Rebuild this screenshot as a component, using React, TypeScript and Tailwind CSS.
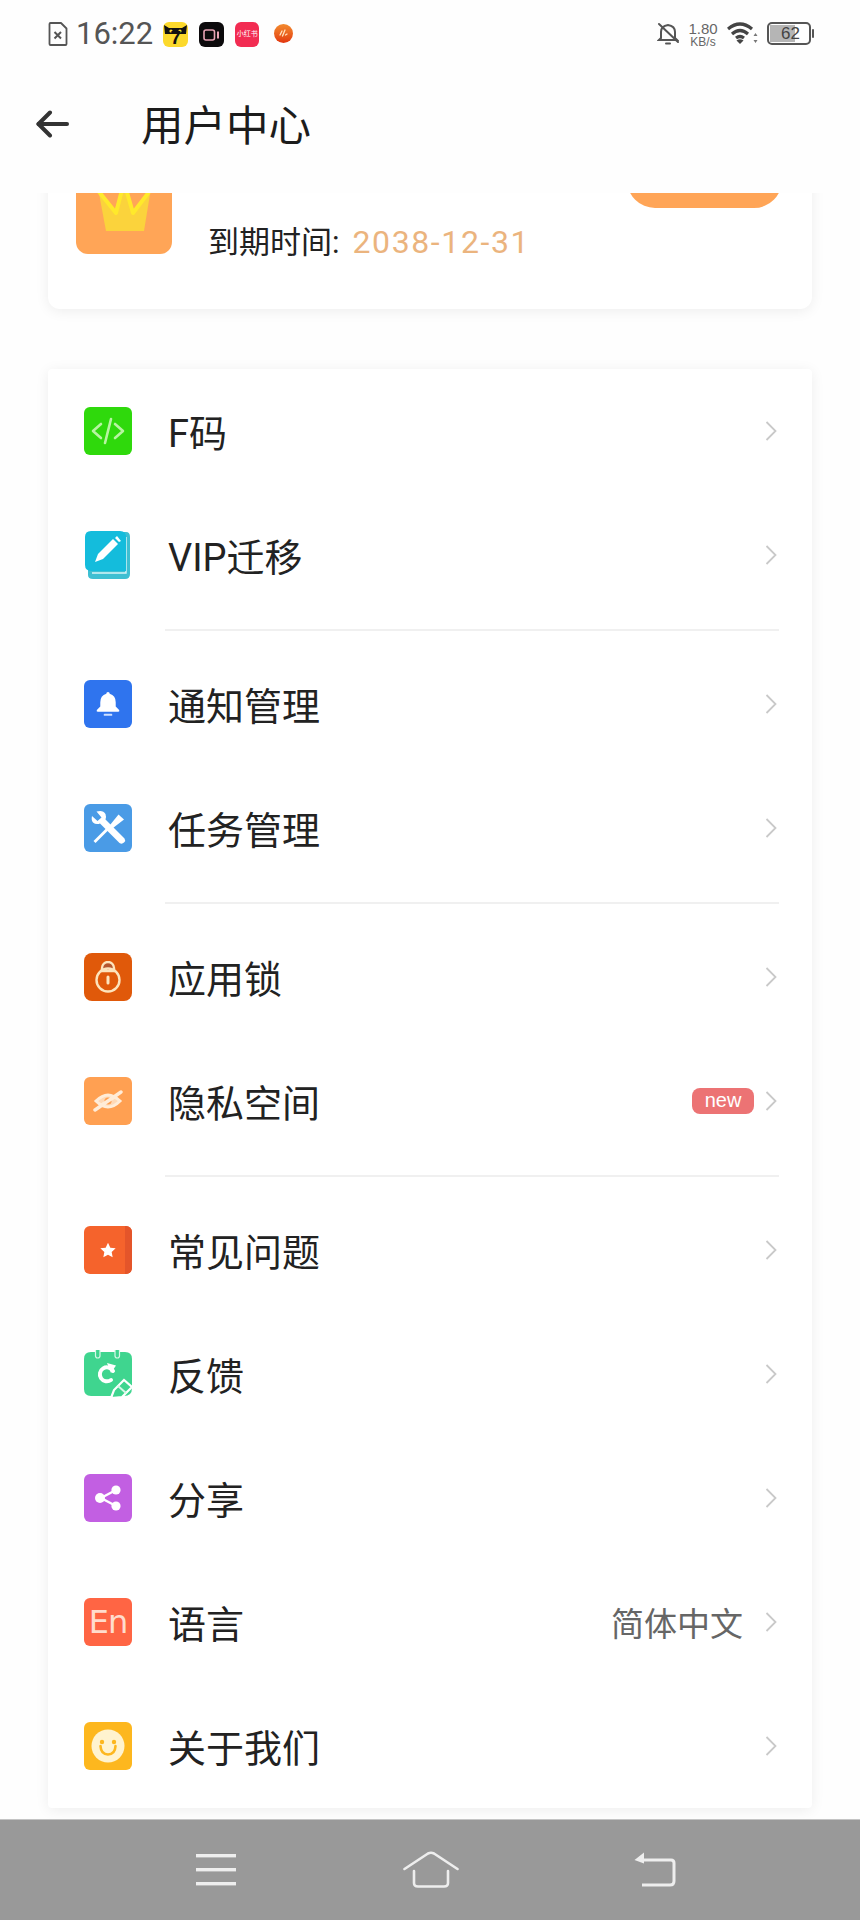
import React from 'react';

const CodeIcon = () => (
  <div className="w-12 h-12 rounded-md bg-[#2fd90c] flex items-center justify-center">
    <svg width="36" height="36" viewBox="0 0 36 36" fill="none" stroke="#b8f4a2" strokeWidth="2.6" strokeLinecap="round" strokeLinejoin="round">
      <path d="M11 11 L3 18 L11 25" />
      <path d="M25 11 L33 18 L25 25" />
      <path d="M21 6 L15 30" />
    </svg>
  </div>
);

const NoteIcon = () => (
  <svg width="48" height="48" viewBox="0 0 48 48">
    <path d="M4 38 V44 Q4 48 9 48 H41 Q46 48 46 43 V6 Q46 1 42 1 H38 V38 Z" fill="#3ebfd2" />
    <path d="M8 42 H42 V6" fill="none" stroke="#d8f5f8" strokeWidth="1.4" />
    <path d="M1 6 Q1 0 7 0 H36 Q42 0 42 6 V40 H8 Q1 40 1 34 Z" fill="#14bcdc" />
    <path d="M11 31 L14 23 L29 8 L34 13 L19 28 Z" fill="#fff" />
    <path d="M31 7 L33 5 L37 10 L35 11 Z" fill="#fff" />
  </svg>
);

const BellIcon = () => (
  <div className="w-12 h-12 rounded-md bg-[#2f74ee] flex items-center justify-center">
    <svg width="24" height="26" viewBox="0 0 28 30" fill="#fff">
      <path d="M14 1 a2 2 0 0 1 2 2 Q23 5 23 13 V18 L27 22 Q28 24 26 24 H2 Q0 24 1 22 L5 18 V13 Q5 5 12 3 a2 2 0 0 1 2 -2 Z" />
      <rect x="9" y="26.5" width="10" height="2.2" rx="1" fill="#cfe0ff" />
    </svg>
  </div>
);

const ToolsIcon = () => (
  <div className="w-12 h-12 rounded-md bg-[#4a9be6] flex items-center justify-center">
    <svg width="38" height="38" viewBox="0 0 38 38" fill="#fff">
      {/* wrench */}
      <path d="M3 7 L8.5 12 L12.5 8.5 L7.5 2.5 Q14 0.5 16.5 5 Q17.5 8 16.5 10.5 L35.5 29.5 Q37 31.5 35 33.5 Q33 35.5 30.5 34 L11 14.5 Q7 16 4 13.5 Q2 11 3 7 Z" />
      {/* screwdriver */}
      <path d="M4.5 32 L18 18.5 L20 20.5 L6.5 34 Z" />
      <path d="M21 16 L29.5 5.5 L35 10.5 L24 19 Z" />
    </svg>
  </div>
);

const LockIcon = () => (
  <div className="w-12 h-12 rounded-lg bg-[#e0590a] flex items-center justify-center">
    <svg width="30" height="32" viewBox="0 0 30 32" fill="none" stroke="#fde4bd" strokeWidth="2.4">
      <path d="M9 10 V7 a6 6 0 0 1 12 0 V10 Z" fill="#b5562f" />
      <circle cx="15" cy="19" r="11.5" />
      <path d="M15 16 V22" strokeWidth="3" strokeLinecap="round" />
    </svg>
  </div>
);

const EyeOffIcon = () => (
  <div className="w-12 h-12 rounded-md bg-[#ffa052] flex items-center justify-center">
    <svg width="30" height="24" viewBox="0 0 30 24" fill="none" stroke="#ffecd8" strokeLinecap="round">
      <path d="M3 12 Q15 0 27 12 Q15 24 3 12 Z" strokeWidth="3" fill="#ffd9b6" />
      <path d="M2 21 L28 3" strokeWidth="3.4" />
      <circle cx="15" cy="12" r="3.6" fill="#ffa052" stroke="none" />
      <path d="M9 16 L21 8" stroke="#ffecd8" strokeWidth="3.4" />
    </svg>
  </div>
);

const StarIcon = () => (
  <div className="w-12 h-12 rounded-md bg-[#f5632c] relative overflow-hidden flex items-center justify-center">
    <div className="absolute right-0 top-0 bottom-0 w-[7px] bg-[#e4552a]" />
    <svg width="16" height="16" viewBox="0 0 24 24" fill="#fff" className="relative">
      <path d="M12 1 L15.5 8.5 L23.5 9.5 L17.5 15 L19 23 L12 19 L5 23 L6.5 15 L0.5 9.5 L8.5 8.5 Z" />
    </svg>
  </div>
);

const FeedbackIcon = () => (
  <svg width="48" height="48" viewBox="0 0 48 48">
    <path d="M0 9 Q0 2 7 2 H41 Q48 2 48 9 V38 Q48 46 40 46 H7 Q0 46 0 39 Z" fill="#3fd58f" />
    <rect x="11.5" y="-2" width="4.5" height="10" rx="2.2" fill="#3fd58f" stroke="#d8f7e8" strokeWidth="1.2" />
    <rect x="31" y="-2" width="4.5" height="10" rx="2.2" fill="#3fd58f" stroke="#d8f7e8" strokeWidth="1.2" />
    <path d="M29 21 A7 7 0 1 0 27 30" fill="none" stroke="#fff" strokeWidth="4" strokeLinecap="round" />
    <path d="M23 13 L32 15.5 L27 23 Z" fill="#fff" />
    <path d="M27 48 L30 40 L40 30 L48 37 L38 47 Z" fill="#3fd58f" stroke="#fff" strokeWidth="2.2" />
    <path d="M34 36 L42 43" stroke="#d5f7e6" strokeWidth="2" />
  </svg>
);

const ShareIcon = () => (
  <div className="w-12 h-12 rounded-md bg-[#c25fe2] flex items-center justify-center">
    <svg width="28" height="28" viewBox="0 0 28 28" fill="#fff" stroke="#fff">
      <path d="M22 6 L7 14 L22 22" fill="none" strokeWidth="2.4" />
      <circle cx="22" cy="6" r="4.6" stroke="none" />
      <circle cx="6" cy="14" r="5" stroke="none" />
      <circle cx="22" cy="22" r="4.6" stroke="none" />
    </svg>
  </div>
);

const EnIcon = () => (
  <div className="w-12 h-12 rounded-md bg-[#ff6544] flex items-center justify-center">
    <span className="text-[32px] leading-none text-[#ffdccd] font-['DejaVu_Sans',sans-serif] font-normal tracking-[-1px]">En</span>
  </div>
);

const SmileIcon = () => (
  <div className="w-12 h-12 rounded-md bg-[#fdb71e] flex items-center justify-center">
    <svg width="36" height="36" viewBox="0 0 36 36">
      <circle cx="18" cy="18" r="16.5" fill="#fff3cf" />
      <circle cx="12" cy="14" r="2.2" fill="#fdb71e" />
      <circle cx="24" cy="14" r="2.2" fill="#fdb71e" />
      <path d="M10.5 18 Q11 26.5 18 26.5 Q25 26.5 25.5 18" fill="none" stroke="#fdb71e" strokeWidth="2.6" strokeLinecap="round" />
    </svg>
  </div>
);

const Chevron = () => (
  <svg width="12" height="20" viewBox="0 0 12 20" fill="none" stroke="#c9c9c9" strokeWidth="1.8" className="shrink-0">
    <path d="M1.5 1 L10.5 10 L1.5 19" />
  </svg>
);

type Row = {
  label: string;
  icon: React.ReactNode;
  badge?: string;
  value?: string;
};

const groups: Row[][] = [
  [
    { label: 'F码', icon: <CodeIcon /> },
    { label: 'VIP迁移', icon: <NoteIcon /> },
  ],
  [
    { label: '通知管理', icon: <BellIcon /> },
    { label: '任务管理', icon: <ToolsIcon /> },
  ],
  [
    { label: '应用锁', icon: <LockIcon /> },
    { label: '隐私空间', icon: <EyeOffIcon />, badge: 'new' },
  ],
  [
    { label: '常见问题', icon: <StarIcon /> },
    { label: '反馈', icon: <FeedbackIcon /> },
    { label: '分享', icon: <ShareIcon /> },
    { label: '语言', icon: <EnIcon />, value: '简体中文' },
    { label: '关于我们', icon: <SmileIcon /> },
  ],
];

const MenuRow = ({ row }: { row: Row }) => (
  <div className="h-[124px] flex items-center pl-9 pr-[35px]">
    <div className="w-12 h-12 shrink-0">{row.icon}</div>
    <span className="ml-9 mt-[5px] text-[38px] leading-none text-[#222]">{row.label}</span>
    <div className="ml-auto flex items-center">
      {row.value && <span className="mr-[22px] mt-[5px] text-[33px] leading-none text-[#666]">{row.value}</span>}
      {row.badge && (
        <span className="mr-[11px] w-[62px] h-[26px] rounded-lg bg-[#ec7374] text-white text-[20px] leading-[25px] text-center font-['Liberation_Sans',sans-serif]">
          {row.badge}
        </span>
      )}
      <Chevron />
    </div>
  </div>
);

const StatusBar = () => (
  <div className="h-[60px] shrink-0 flex items-start pt-[22px] pl-12 pr-[46px]">
    <svg width="20" height="24" viewBox="0 0 20 24" fill="none" stroke="#555" strokeWidth="1.8" strokeLinejoin="round">
      <path d="M1.5 2 Q1.5 1 2.5 1 H13 L18.5 6.5 V22 Q18.5 23 17.5 23 H2.5 Q1.5 23 1.5 22 Z" />
      <path d="M6.5 10 L13 16.5 M13 10 L6.5 16.5" strokeWidth="2" />
    </svg>
    <span className="ml-[8px] text-[31px] leading-[24px] text-[#555] font-['Roboto',sans-serif]">16:22</span>
    {/* notification app icons */}
    <div className="ml-[10px] w-[25px] h-[25px] rounded-md bg-[#fcd92c] relative flex items-center justify-center">
      <svg width="25" height="25" viewBox="0 0 25 25" className="absolute left-0 top-0">
        <path d="M1 3 L6 6 H19 L24 3 L23 12 H2 Z" fill="#111" />
        <circle cx="8" cy="9" r="1.6" fill="#fcd92c" />
        <circle cx="17" cy="9" r="1.6" fill="#fcd92c" />
      </svg>
      <span className="relative mt-[6px] text-[19px] leading-none font-bold text-[#111] font-['Liberation_Sans',sans-serif]">7</span>
    </div>
    <div className="ml-[11px] w-[25px] h-[25px] rounded-md bg-[#0c0a0c] flex items-center justify-center">
      <svg width="17" height="12" viewBox="0 0 17 12" fill="none" stroke="#e8a3b5" strokeWidth="1.6">
        <rect x="1" y="1" width="10.5" height="10" rx="2" />
        <path d="M15 2.5 V9.5" strokeWidth="2" />
      </svg>
    </div>
    <div className="ml-[11px] w-[24px] h-[25px] rounded-md bg-[#f22c52] flex items-center justify-center">
      <span className="text-[7px] leading-none text-white whitespace-nowrap">小红书</span>
    </div>
    <div className="ml-[15px] mt-[2px] w-[19px] h-[19px] rounded-full bg-gradient-to-b from-[#f28a2e] to-[#e2340f] flex items-center justify-center">
      <svg width="11" height="11" viewBox="0 0 11 11" fill="none" stroke="#ffe2c2" strokeWidth="1.3" strokeLinecap="round">
        <path d="M2 7 L4 3 M4.5 8 L7 2 M7.5 7 L9 6" />
      </svg>
    </div>

    <div className="ml-auto flex items-start">
      <svg width="22" height="23" viewBox="0 0 22 23" fill="none" stroke="#555" strokeWidth="2" strokeLinecap="round">
        <path d="M4 16 V10 Q4 4 11 3 Q18 4 18 10 V16 L20 18 H2 Z" />
        <path d="M9 21.5 H13" />
        <path d="M2 2 L21 20" />
      </svg>
      <div className="ml-2 w-[32px] flex flex-col items-center text-[#666] font-['Liberation_Sans',sans-serif]">
        <span className="text-[15px] leading-[14px]">1.80</span>
        <span className="text-[12px] leading-[13px]">KB/s</span>
      </div>
      <svg width="32" height="24" viewBox="0 0 32 24" fill="none" stroke="#444" strokeWidth="3.2" className="ml-2">
        <path d="M1 7 Q13 -3 25 7" />
        <path d="M5 12 Q13 5 21 12" />
        <path d="M9 16 Q13 13 17 16" />
        <path d="M13 22 L9.5 18.5 Q13 16 16.5 18.5 Z" fill="#444" stroke="none" />
        <path d="M28.5 11 L26.5 14 H30.5 Z M28.5 21 L26.5 18 H30.5 Z" fill="#777" stroke="none" />
      </svg>
      <div className="ml-[8px] w-[44px] h-[23px] rounded-[5px] border-2 border-[#555] relative overflow-hidden">
        <div className="absolute left-[1px] top-[1px] bottom-[1px] w-[25px] bg-[#b5b5b5]" />
        <span className="absolute left-[12px] top-0 text-[17px] leading-[19px] text-[#444] font-['Liberation_Sans',sans-serif]">62</span>
      </div>
      <div className="ml-[1px] mt-[7px] w-[2px] h-[9px] rounded-full bg-[#555]" />
    </div>
  </div>
);

const VipCard = () => (
  <div className="h-[216px] rounded-xl bg-white shadow-[0_2px_14px_rgba(0,0,0,0.07)] pt-[59px] pl-7 pr-[30px] flex items-start">
    <div className="mt-[6px] w-24 h-24 rounded-xl bg-[#ffa557] shrink-0">
      <svg width="96" height="96" viewBox="0 0 96 96">
        <path d="M22 30 L30 73 H68 L75 30 L58 54 L48 24 L38 54 Z" fill="#fbd33c" />
        <path d="M20 30 L40 55 L48 24 L57 55 L76 30" fill="none" stroke="#ffe92b" strokeWidth="4" strokeLinejoin="round" />
      </svg>
    </div>
    <div className="ml-9 flex flex-col">
      <span className="mt-[13px] text-[30px] leading-[36px] text-[#222]">VIP</span>
      <div className="mt-[25px] flex items-center leading-none">
        <span className="text-[31px] text-[#222]">到期时间:</span>
        <span className="ml-[13px] text-[32px] tracking-[1.6px] text-[#ebb47e] font-['Roboto',sans-serif]">2038-12-31</span>
      </div>
    </div>
    <div className="ml-auto w-[155px] h-14 pt-1 rounded-full bg-[#ffa557] flex items-center justify-center shrink-0">
      <span className="text-[24px] leading-none text-white">立即续费</span>
    </div>
  </div>
);

const App = () => {
  return (
    <div className="w-[860px] h-[1920px] flex flex-col bg-[#fefefe] overflow-hidden font-['Roboto','Noto_Sans_CJK_SC',sans-serif]">
      <StatusBar />

      <div className="h-[133px] shrink-0 flex items-center pl-9">
        <svg width="34" height="28" viewBox="0 0 34 28" fill="none" stroke="#333" strokeWidth="4" strokeLinecap="round" strokeLinejoin="round" className="-mt-[5px]">
          <path d="M2.5 14 H31" />
          <path d="M14 2.5 L2.5 14 L14 25.5" />
        </svg>
        <h1 className="ml-[71px] mt-[1px] text-[42.5px] leading-none font-normal text-[#1c1c1c]">用户中心</h1>
      </div>

      {/* list is scrolled: the top of the VIP card sits under the header */}
      <div className="flex-1 overflow-hidden">
        <div className="-mt-[100px] px-12">
          <VipCard />
          <div className="mt-[60px] h-[1439px] rounded-sm bg-white shadow-[0_2px_14px_rgba(0,0,0,0.07)]">
            {groups.map((group, i) => (
              <div key={i}>
                {i > 0 && <div className="mt-3 mb-[11px] ml-[117px] mr-[33px] h-[2px] bg-[#f0f0f0]" />}
                {group.map((row) => (
                  <MenuRow key={row.label} row={row} />
                ))}
              </div>
            ))}
          </div>
        </div>
      </div>

      <div className="h-[101px] shrink-0 bg-[#999] border-t border-[#c4c4c4] flex items-start">
        <svg width="40" height="34" viewBox="0 0 40 34" fill="#eee" className="ml-[196px] mt-[32px]">
          <rect x="0" y="2" width="40" height="3.4" />
          <rect x="0" y="16" width="40" height="3.4" />
          <rect x="0" y="30" width="40" height="3.4" />
        </svg>
        <svg width="56" height="37" viewBox="0 0 56 37" fill="none" stroke="#eee" strokeWidth="2.6" strokeLinecap="round" strokeLinejoin="round" className="ml-[167px] mt-[31px]">
          <path d="M1.5 18 L25 2.5 Q28 1 31 2.5 L54.5 18" />
          <path d="M11 20 V32 Q11 35.5 15 35.5 H41 Q45 35.5 45 32 V20" />
        </svg>
        <svg width="42" height="36" viewBox="0 0 42 36" fill="none" stroke="#eee" strokeWidth="3" className="ml-[175px] mt-[32px]">
          <path d="M6 8 H37 Q40 8 40 11 V29 Q40 33 36 33 H8" />
          <path d="M10 0.5 V11.5 L0.5 8 Z" fill="#eee" stroke="none" />
        </svg>
      </div>
    </div>
  );
};

export default App;
